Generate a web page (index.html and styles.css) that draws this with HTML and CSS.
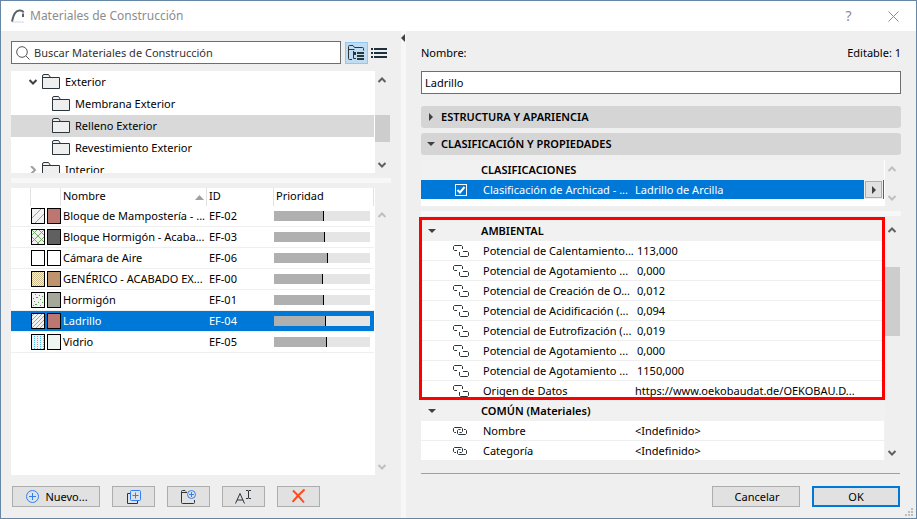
FILE: index.html
```html
<!DOCTYPE html>
<html lang="es">
<head>
<meta charset="utf-8">
<title>Materiales de Construcción</title>
<link rel="stylesheet" href="styles.css">
</head>
<body>
<svg class="defs" aria-hidden="true">
  <defs>
    <symbol id="folder" viewBox="0 0 19 16"><path d="M.5 14.500V2q0-1.500 1.500-1.500h4.500l2 3" fill="#f0f0f0" stroke="#2b363c"/><path d="M.5 3.500h17v11H.5z" fill="#efefef" stroke="#2b363c"/></symbol>
    <symbol id="down" viewBox="0 0 10 6"><path d="M1.500 1 5 4.500 8.500 1" fill="none" stroke="currentColor" stroke-width="2"/></symbol>
    <symbol id="up" viewBox="0 0 10 6"><path d="M1.500 5 5 1.500 8.500 5" fill="none" stroke="currentColor" stroke-width="2"/></symbol>
    <symbol id="tri-down" viewBox="0 0 8 4"><path d="M0 0h8L4 4z" fill="#404040"/></symbol>
    <symbol id="tri-right" viewBox="0 0 4 8"><path d="M0 0v8l4-4z" fill="#404040"/></symbol>
    <symbol id="unlinked" viewBox="0 0 16 12"><path d="M4 5.500H1.500l-1-1v-3l1-1h7l1 1V4M10 6.500h4.500l1 1v3l-1 1h-7l-1-1V7" fill="none" stroke="#2b363c"/></symbol>
    <symbol id="linked" viewBox="0 0 14 8"><path d="M3 5.500H1.500l-1-1v-3l1-1h7l1 1v3l-1 1H6.500M11 2.500h1.500l1 1v3l-1 1h-7l-1-1v-3l1-1h2" fill="none" stroke="#2b363c"/></symbol>
    <pattern id="p-cross" width="7" height="7" patternUnits="userSpaceOnUse"><path d="M-1 8 8-1M-1-1 8 8" stroke="#6fae63" fill="none"/></pattern>
    <pattern id="p-check" width="2" height="2" patternUnits="userSpaceOnUse"><path d="M0 0h1v1H0zM1 1h1v1H1z" fill="#cdbf8d"/></pattern>
    <pattern id="p-dense" width="4" height="4" patternUnits="userSpaceOnUse"><path d="M-1 5 5-1M-1 1 1-1M3 5 5 3" stroke="#f08377" fill="none"/></pattern>
    <pattern id="p-dots" width="3" height="2" patternUnits="userSpaceOnUse"><path d="M0 0h1v1H0z" fill="#58b4e8"/></pattern>
  </defs>
</svg>
<div class="window">
  <header class="titlebar">
    <svg class="logo" width="14" height="14" viewBox="0 0 14 14"><path d="M1 12h12v2H0z" fill="#e8ecf2"/><path d="M1 12.500Q3 2 8 1.500q3.500-.5 4.500 2" fill="none" stroke="#5c6168" stroke-width="2"/><path d="M12 4.500V8" stroke="#5c6168" stroke-width="2"/></svg>
    <h1>Materiales de Construcción</h1>
    <button class="caption help" aria-label="Ayuda">?</button>
    <button class="caption" aria-label="Cerrar"><svg width="11" height="11" viewBox="0 0 11 11"><path d="M.5.500l10 10M10.500.500l-10 10" stroke="#8c8c8c" fill="none"/></svg></button>
  </header>
  <main class="panes">
    <section class="left">
      <div class="search-row">
        <label class="search"><svg width="14" height="14" viewBox="0 0 14 14"><circle cx="6" cy="6" r="5.300" fill="none" stroke="#555"/><path d="M10 10l3.500 3.500" stroke="#555"/></svg><input type="text" aria-label="Buscar" placeholder="Buscar Materiales de Construcción"></label>
        <button class="view active" aria-label="Vista de árbol"><svg width="17" height="16" viewBox="0 0 17 16"><path d="M4 14.500H1.500q-1 0-1-1V1.500q0-1 1-1H5l1.500 2h8q1 0 1 1v2M.5 4.500h6" fill="none" stroke="#2b363c"/><path d="M5.500 6v7.500H8M5.500 9.500H8" fill="none" stroke="#2b363c"/><path d="M6 8h2M9 8h7M9 11h7M9 14h7" stroke="#2b363c" stroke-width="2"/></svg></button>
        <button class="view list" aria-label="Vista de lista"><svg width="16" height="10" viewBox="0 0 16 10"><path d="M0 1h2M3 1h13M0 5h2M3 5h13M0 9h2M3 9h13" stroke="#20303a" stroke-width="2"/></svg></button>
      </div>
      <div class="scrollbox tree">
        <ul class="content">
          <li class="parent"><svg class="chev" width="10" height="6"><use href="#down"/></svg><svg width="19" height="16"><use href="#folder"/></svg>Exterior</li>
          <li><svg width="19" height="16"><use href="#folder"/></svg>Membrana Exterior</li>
          <li class="current"><svg width="19" height="16"><use href="#folder"/></svg>Relleno Exterior</li>
          <li><svg width="19" height="16"><use href="#folder"/></svg>Revestimiento Exterior</li>
          <li class="parent"><svg class="chev closed" width="10" height="8" viewBox="0 0 10 8"><path d="M3 0l4 4-4 4" fill="none" stroke="#a0a0a0" stroke-width="2"/></svg><svg width="19" height="16"><use href="#folder"/></svg>Interior</li>
        </ul>
        <div class="bar"><svg width="10" height="6"><use href="#up"/></svg><span class="thumb tree-thumb"></span><svg width="10" height="6"><use href="#down"/></svg></div>
      </div>
      <div class="hsplit"></div>
      <div class="scrollbox materials">
        <div class="content">
          <table>
            <colgroup><col class="c-pad"><col class="c-swatch"><col class="c-name"><col class="c-id"><col class="c-prio"></colgroup>
            <thead><tr><th></th><th></th><th><span class="sorted">Nombre<svg width="9" height="5" viewBox="0 0 9 5"><path d="M4.500 0 9 5H0z" fill="#a0a0a0"/></svg></span></th><th>ID</th><th>Prioridad</th></tr></thead>
            <tbody>
              <tr><td></td><td><span class="pair"><svg width="14" height="16"><rect x=".5" y=".5" width="13" height="15" fill="#f2f2f2" stroke="#000"/><path d="M1 10 10 1M4 15l9-9" stroke="#f58a3c"/></svg><i class="sw brick"></i></span></td><td>Bloque de Mampostería - ...</td><td>EF-02</td><td><div class="prio"><span style="width:52%"></span></div></td></tr>
              <tr><td></td><td><span class="pair"><svg width="14" height="16"><rect width="14" height="16" fill="#f2f2f2"/><rect x=".5" y=".5" width="13" height="15" fill="url(#p-cross)" stroke="#000"/></svg><i class="sw dark"></i></span></td><td>Bloque Hormigón - Acaba...</td><td>EF-03</td><td><div class="prio"><span style="width:53%"></span></div></td></tr>
              <tr><td></td><td><span class="pair"><i class="sw"></i><i class="sw"></i></span></td><td>Cámara de Aire</td><td>EF-06</td><td><div class="prio"><span style="width:56%"></span></div></td></tr>
              <tr><td></td><td><span class="pair"><svg width="14" height="16"><rect width="14" height="16" fill="#f2f0e4"/><rect x=".5" y=".5" width="13" height="15" fill="url(#p-check)" stroke="#000"/></svg><i class="sw tan"></i></span></td><td>GENÉRICO - ACABADO EX...</td><td>EF-00</td><td><div class="prio"><span style="width:51%"></span></div></td></tr>
              <tr><td></td><td><span class="pair"><svg width="14" height="16"><rect x=".5" y=".5" width="13" height="15" fill="#f2f2f2" stroke="#000"/><path d="M4 2h1v1H4zM8 3h1v1H8zM11 4h1v1h-1zM2 6h1v1H2zM5 5h2v1H5zM9 7h1v1H9zM3 9h1v1H3zM4 12h2v1H4zM7 10h1v1H7zM11 10h1v1h-1zM9 13h1v1H9zM2 13h1v1H2z" fill="#55a548"/></svg><i class="sw grey"></i></span></td><td>Hormigón</td><td>EF-01</td><td><div class="prio"><span style="width:52%"></span></div></td></tr>
              <tr class="selected"><td></td><td><span class="pair"><svg width="14" height="16"><rect width="14" height="16" fill="#f2f2f2"/><rect x=".5" y=".5" width="13" height="15" fill="url(#p-dense)" stroke="#000"/></svg><i class="sw brick"></i></span></td><td>Ladrillo</td><td>EF-04</td><td><div class="prio"><span style="width:54%"></span></div></td></tr>
              <tr><td></td><td><span class="pair"><svg width="14" height="16"><rect width="14" height="16" fill="#f2f2f2"/><rect x=".5" y=".5" width="13" height="15" fill="url(#p-dots)" stroke="#000"/></svg><i class="sw glass"></i></span></td><td>Vidrio</td><td>EF-05</td><td><div class="prio"><span style="width:55%"></span></div></td></tr>
            </tbody>
          </table>
        </div>
        <div class="bar off low"><svg width="10" height="6"><use href="#up"/></svg><svg width="10" height="6"><use href="#down"/></svg></div>
      </div>
      <div class="actions">
        <button class="btn wide"><svg width="13" height="13" viewBox="0 0 13 13"><circle cx="6.500" cy="6.500" r="6" fill="none" stroke="#2f80f5"/><path d="M6.500 3v7M3 6.500h7" stroke="#2f80f5"/></svg>Nuevo...</button>
        <button class="btn" aria-label="Duplicar"><svg width="14" height="14" viewBox="0 0 14 14"><path d="M3 3.500H.5v10h10V11" fill="none" stroke="#2b363c"/><rect x="3.500" y=".5" width="10" height="10" rx="1" fill="none" stroke="#2f80f5"/><path d="M8.500 2.500v6M5.500 5.500h6" stroke="#2f80f5"/></svg></button>
        <button class="btn" aria-label="Nueva carpeta"><svg width="15" height="14" viewBox="0 0 15 14"><path d="M5 1.500 4 .5H1.500q-1 0-1 1v11q0 1 1 1h11q1 0 1-1V10M.5 2.500H6" fill="none" stroke="#2b363c"/><circle cx="10.500" cy="4.500" r="4" fill="none" stroke="#2f80f5"/><path d="M10.500 2v5M8 4.500h5" stroke="#2f80f5"/></svg></button>
        <button class="btn" aria-label="Renombrar"><svg width="17" height="14" viewBox="0 0 17 14"><path d="M.5 13.500 5 3.500l4.500 10M2 10h6" fill="none" stroke="#2b363c"/><path d="M11 .5h2l.5.500.500-.5h2M11 8.500h2l.5-.5.500.500h2M13.500 1v7" fill="none" stroke="#2b363c"/></svg></button>
        <button class="btn" aria-label="Eliminar"><svg width="13" height="15" viewBox="0 0 13 15"><path d="M1 1.500Q6 6 12 13.500M12.500.5Q6 6 .5 13" fill="none" stroke="#ff4a1c" stroke-width="2"/></svg></button>
      </div>
    </section>
    <div class="vsplit"><svg width="4" height="8" viewBox="0 0 4 8"><path d="M4 0v8L0 4z" fill="#404040"/></svg></div>
    <section class="right">
      <div class="caption-row"><label for="name">Nombre:</label><span>Editable: 1</span></div>
      <input class="name" id="name" type="text" value="Ladrillo">
      <button class="section"><span class="mark"><svg width="4" height="8"><use href="#tri-right"/></svg></span>ESTRUCTURA Y APARIENCIA</button>
      <button class="section open"><span class="mark"><svg width="8" height="4"><use href="#tri-down"/></svg></span>CLASIFICACIÓN Y PROPIEDADES</button>
      <div class="scrollbox classes">
        <div class="content">
          <h2 class="group">CLASIFICACIONES</h2>
          <div class="class-row"><input type="checkbox" id="cls" checked><label for="cls">Clasificación de Archicad - ...</label><span class="value">Ladrillo de Arcilla</span><button aria-label="Elegir clasificación"><svg width="4" height="8"><use href="#tri-right"/></svg></button></div>
        </div>
        <div class="bar off"><svg width="10" height="6"><use href="#up"/></svg><svg width="10" height="6"><use href="#down"/></svg></div>
      </div>
      <div class="hsplit"></div>
      <div class="scrollbox props">
        <div class="content">
          <table>
            <colgroup><col class="p-icon"><col class="p-name"><col></colgroup>
            <tbody>
              <tr class="group"><th><svg width="8" height="4"><use href="#tri-down"/></svg></th><th colspan="2">AMBIENTAL</th></tr>
              <tr><td><svg width="16" height="12"><use href="#unlinked"/></svg></td><td>Potencial de Calentamiento...</td><td class="num">113,000</td></tr>
              <tr><td><svg width="16" height="12"><use href="#unlinked"/></svg></td><td>Potencial de Agotamiento ...</td><td class="num">0,000</td></tr>
              <tr><td><svg width="16" height="12"><use href="#unlinked"/></svg></td><td>Potencial de Creación de O...</td><td class="num">0,012</td></tr>
              <tr><td><svg width="16" height="12"><use href="#unlinked"/></svg></td><td>Potencial de Acidificación (...</td><td class="num">0,094</td></tr>
              <tr><td><svg width="16" height="12"><use href="#unlinked"/></svg></td><td>Potencial de Eutrofización (...</td><td class="num">0,019</td></tr>
              <tr><td><svg width="16" height="12"><use href="#unlinked"/></svg></td><td>Potencial de Agotamiento ...</td><td class="num">0,000</td></tr>
              <tr><td><svg width="16" height="12"><use href="#unlinked"/></svg></td><td>Potencial de Agotamiento ...</td><td class="num">1150,000</td></tr>
              <tr><td><svg width="16" height="12"><use href="#unlinked"/></svg></td><td>Origen de Datos</td><td>https://www.oekobaudat.de/OEKOBAU.D...</td></tr>
            </tbody>
            <tbody>
              <tr class="group"><th><svg width="8" height="4"><use href="#tri-down"/></svg></th><th colspan="2">COMÚN (Materiales)</th></tr>
              <tr><td><svg width="14" height="8"><use href="#linked"/></svg></td><td>Nombre</td><td>&lt;Indefinido&gt;</td></tr>
              <tr><td><svg width="14" height="8"><use href="#linked"/></svg></td><td>Categoría</td><td>&lt;Indefinido&gt;</td></tr>
            </tbody>
          </table>
          <div class="highlight"></div>
        </div>
        <div class="bar"><svg width="10" height="6"><use href="#up"/></svg><span class="thumb props-thumb"></span><svg width="10" height="6"><use href="#down"/></svg></div>
      </div>
      <div class="footer">
        <button class="btn wide">Cancelar</button>
        <button class="btn wide primary">OK</button>
      </div>
      <svg class="grip" width="8" height="8" viewBox="0 0 8 8"><path d="M6 0h2v2H6zM3 3h2v2H3zM6 3h2v2H6zM0 6h2v2H0zM3 6h2v2H3zM6 6h2v2H6z" fill="#bdbdbd"/></svg>
    </section>
  </main>
</div>
</body>
</html>
```
FILE: styles.css
```css
* { box-sizing: border-box; }
body, h1, h2, ul { margin: 0; padding: 0; }
body, button, input { font: 11px/16px "Noto Sans", "Open Sans", sans-serif; color: #000; }
button, input { border-radius: 0; padding: 0; margin: 0; }
svg { display: block; flex: none; }
.defs { position: absolute; width: 0; height: 0; }

.window {
  display: flex;
  flex-direction: column;
  min-height: 100vh;
  border: 1px solid #6587a5;
  background: #efefef;
}
.titlebar { display: flex; align-items: center; height: 30px; padding-left: 10px; background: #fff; }
.titlebar h1 { flex: 1; margin-left: 5px; font-size: 12px; font-weight: 400; color: #8c8c8c; }
.caption { display: flex; align-items: center; justify-content: center; width: 45px; height: 29px; border: 0; background: none; color: #8c8c8c; }
.help { font-size: 14px; }

.panes { flex: 1; display: grid; grid-template-columns: minmax(0, 400fr) 5px minmax(0, 510fr); }
.left, .right { display: flex; flex-direction: column; min-width: 0; }
.left { padding: 10px 10px 11px; }
.right { position: relative; padding: 10px 15px 11px; }
.vsplit { background: #f7f7f7; padding-top: 3px; }
.hsplit { height: 5px; margin: 5px 0; background: #f7f7f7; flex: none; }

.search-row { display: flex; align-items: center; height: 23px; margin-bottom: 7px; }
.search { flex: 1; display: flex; align-items: center; gap: 4px; height: 23px; padding: 0 4px; margin-right: 4px; border: 1px solid #6e6e6e; background: #fff; }
.search input { flex: 1; min-width: 0; border: 0; background: none; outline: 0; }
.search input::placeholder { color: #333; opacity: 1; }
.view { display: flex; align-items: center; justify-content: center; width: 23px; height: 22px; border: 1px solid transparent; background: none; }
.view.list { width: 22px; margin-right: 1px; }
.view.active { border-color: #90c8f6; background: #c0dcf3; }

.scrollbox { display: flex; }
.scrollbox > .content { flex: 1; min-width: 0; background: #fff; overflow: hidden; }
.bar { position: relative; display: flex; flex-direction: column; align-items: center; justify-content: space-between; width: 16px; padding: 6px 2px 5px 0; color: #606060; }
.bar.off { color: #bfbfbf; }
.bar.low { padding-top: 24px; }
.thumb { position: absolute; left: 0; width: 15px; background: #cdcdcd; }

.tree { height: 102px; }
.tree ul { list-style: none; }
.tree li { display: flex; align-items: center; gap: 4px; height: 22px; margin-right: 1px; padding-left: 41px; white-space: nowrap; }
.tree li.parent { padding-left: 17px; }
.tree .current { background: #d9d9d9; }
.tree .chev { color: #404040; }
.tree-thumb { top: 44px; height: 27px; }

.materials { flex: 1; }
table { border-collapse: separate; border-spacing: 0; table-layout: fixed; width: 100%; }
th, td { padding: 0; text-align: left; font-weight: 400; white-space: nowrap; }
.materials .content { padding-right: 1px; }
.materials th { height: 18px; padding-left: 2px; border-right: 1px solid #e2e2e2; line-height: 16px; vertical-align: top; }
.materials td { height: 21px; padding-left: 2px; border-bottom: 1px solid #efefef; }
.materials td:nth-child(2), .materials td:nth-child(5) { padding-left: 0; }
.c-pad { width: 20px; }
.c-swatch { width: 30px; }
.c-name { width: 146px; }
.c-id { width: 67px; }
.sorted { display: flex; align-items: center; justify-content: space-between; padding-right: 2px; }
.sorted svg { margin-top: 3px; }
.selected td { background: #0078d7; color: #fff; }
.pair { display: flex; gap: 2px; }
.sw { width: 14px; height: 16px; border: 1px solid #000; background: #fff; }
.brick { background: #bc7770; }
.dark { background: #606060; }
.tan { background: #bf946d; }
.grey { background: #a5a79b; }
.glass { background: #eff6f2; }
.prio { height: 10px; margin-right: 4px; background: #e5e5e5; }
.prio span { display: block; height: 10px; background: #b0b0b0; border-right: 1px solid #000; }

.actions { display: flex; gap: 12px; margin: 11px 0 0 1px; }
.btn { display: flex; align-items: center; justify-content: center; gap: 6px; width: 43px; height: 21px; border: 1px solid #adadad; background: #e1e1e1; }
.btn.wide { width: 88px; padding-left: 2px; }
.btn.primary { border: 2px solid #0078d7; padding: 0; }

.caption-row { display: flex; justify-content: space-between; align-items: center; height: 23px; margin-bottom: 7px; }
.name { width: 100%; height: 23px; flex: none; padding: 0 3px; border: 1px solid #6e6e6e; background: #fff; }
.section { display: flex; align-items: center; flex: none; height: 22px; margin-top: 12px; border: 0; border-radius: 3px; background: #d5d5d5; font-weight: 600; }
.section.open { margin: 5px 0; }
.mark { display: flex; justify-content: center; width: 20px; }

.classes { height: 46px; }
h2.group { height: 20px; padding-left: 60px; margin-right: 1px; background: #f1f1f1; font-size: 11px; font-weight: 600; line-height: 20px; }
.class-row { display: flex; align-items: center; height: 19px; margin-right: 1px; padding: 0 2px 0 34px; background: #0078d7; color: #fff; white-space: nowrap; }
.class-row input { appearance: none; width: 12px; height: 12px; border: 1px solid #fff; background: no-repeat center/10px url('data:image/svg+xml,<svg xmlns="http://www.w3.org/2000/svg" viewBox="0 0 10 10"><path d="M1.500 5l2.500 2.500L8.500 2" fill="none" stroke="white" stroke-width="2"/></svg>'); }
.class-row label { width: 152px; margin-left: 16px; }
.class-row .value { flex: 1; }
.class-row button { display: flex; align-items: center; justify-content: center; width: 17px; height: 17px; border: 1px solid #adadad; background: #e1e1e1; outline: 1px solid #efefef; }

.props { flex: 1; margin-top: -1px; }
.props > .content { position: relative; overflow: visible; flex: 1; padding: 1px 1px 0 0; background: #f1f1f1; }
.props .bar { padding-top: 7px; }
.props-thumb { top: 47px; height: 69px; }
.props td { height: 20px; background: #fff; border-bottom: 1px solid #efefef; line-height: 19px; }
.props td:first-child { padding-left: 32px; }
.props td.num { padding-left: 2px; }
.props .group th { height: 20px; background: #f1f1f1; font-weight: 600; }
.props .group th:first-child { padding-left: 7px; }
.props .group th:last-child { padding-left: 0; }
.props td:nth-child(2) { padding-left: 2px; }
.p-icon { width: 60px; }
.p-name { width: 154px; }
.highlight { position: absolute; left: -2px; right: 0; top: -3px; height: 183px; border: 3px solid #f00; }

.footer { display: flex; justify-content: flex-end; gap: 12px; margin: 12px 1px 0 0; padding-top: 12px; border-top: 1px solid #a0a0a0; }
.grip { position: absolute; right: 3px; bottom: 2px; }
```
